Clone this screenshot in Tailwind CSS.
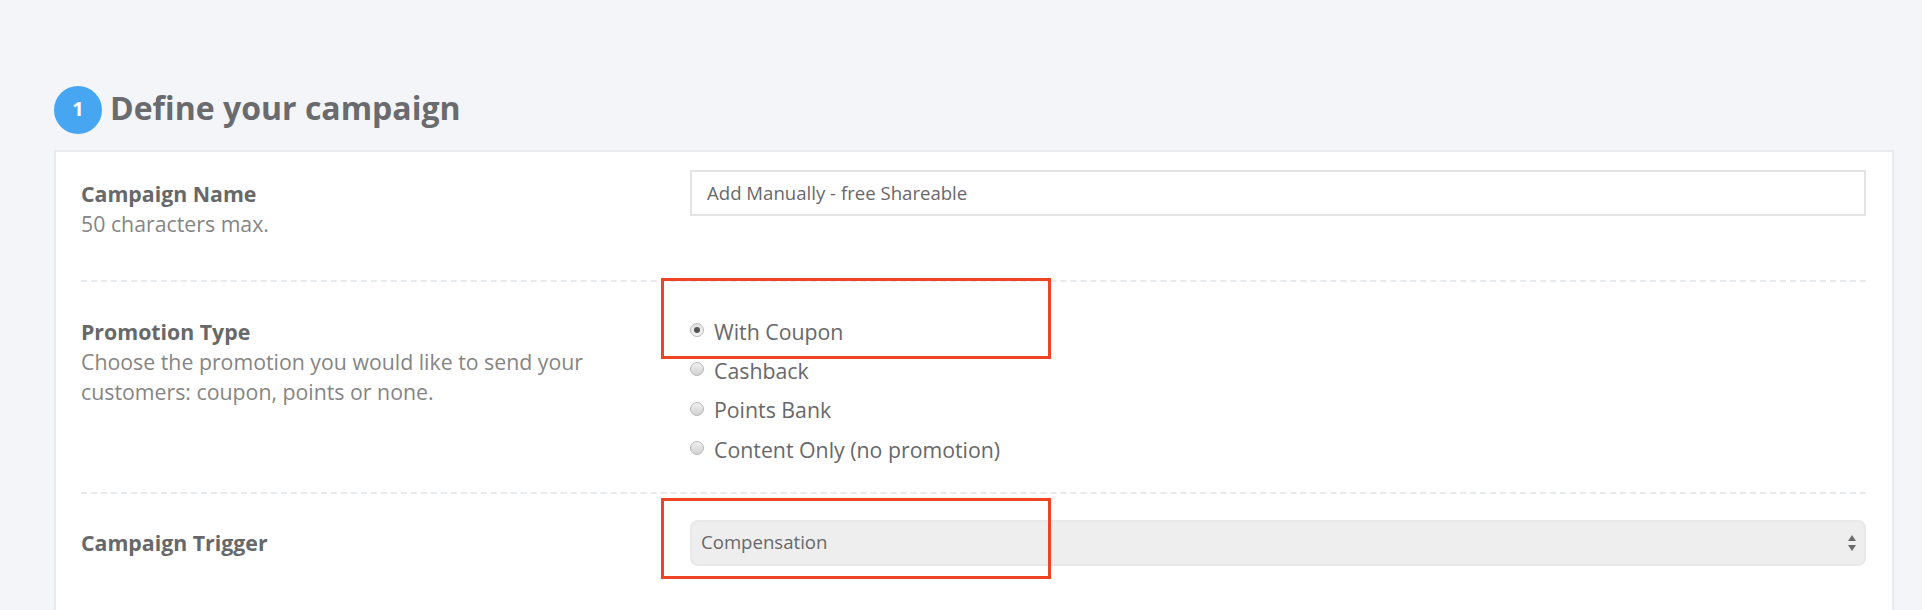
<!DOCTYPE html>
<html lang="en">
<head>
    <meta charset="UTF-8">
    <title>Define your campaign</title>
    <script src="https://cdn.jsdelivr.net/npm/@tailwindcss/browser@4"></script>
</head>
<body class="bg-[#f4f5f9] h-[610px] overflow-hidden font-['Open_Sans',sans-serif] text-[#67686a]">
    <div class="relative pl-[54px] pr-[28px] pt-[86px] h-[610px] overflow-hidden">
        <!-- Heading -->
        <div class="flex items-center gap-[8px] h-[48px]">
            <div class="w-[48px] h-[48px] rounded-full bg-[#47a6f1] text-white flex items-center justify-center text-[20px] font-bold pb-[2px]">1</div>
            <h1 class="text-[32px] leading-[48px] font-bold text-[#6a6b6e] mt-[-4px]">Define your campaign</h1>
        </div>

        <!-- Card -->
        <div class="mt-[16px] bg-white border-2 border-[#e9eaee] h-[500px] pl-[25px] pr-[26px]">
            <div class="flex h-[130px] border-b-2 border-dashed border-[#e8ebee] pt-[18px]">
                <div class="w-[609px] pt-[9px]">
                    <p class="text-[21.3px] leading-[30px] font-bold">Campaign Name</p>
                    <p class="text-[21.3px] leading-[30px] text-[#858585]">50 characters max.</p>
                </div>
                <input class="flex-1 h-[46px] border-2 border-[#e4e4e4] px-[15px] pb-[1px] text-[18.6px] text-[#67686a] outline-none bg-white" value="Add Manually - free Shareable">
            </div>

            <div class="flex h-[212px] border-b-2 border-dashed border-[#e8ebee] pt-[35px]">
                <div class="w-[609px]">
                    <p class="text-[21.3px] leading-[30px] font-bold">Promotion Type</p>
                    <p class="text-[21.3px] leading-[30px] text-[#858585]">Choose the promotion you would like to send your<br>customers: coupon, points or none.</p>
                </div>
                <div class="flex flex-col text-[21.3px] leading-[39.6px] mt-[-5px]">
                    <label class="flex items-center gap-[10px] mb-[-1px]">
                        <span class="w-[14px] h-[14px] rounded-full border border-[#b9b9b9] bg-linear-to-b from-[#e2e2e2] to-[#f4f4f4] flex items-center justify-center mt-[-4px]"><span class="w-[6px] h-[6px] rounded-full bg-[#555]"></span></span>
                        With Coupon
                    </label>
                    <label class="flex items-center gap-[10px]">
                        <span class="w-[14px] h-[14px] rounded-full border border-[#b9b9b9] bg-linear-to-b from-[#f0f0f0] to-[#d2d2d2] mt-[-2px]"></span>
                        Cashback
                    </label>
                    <label class="flex items-center gap-[10px]">
                        <span class="w-[14px] h-[14px] rounded-full border border-[#b9b9b9] bg-linear-to-b from-[#f0f0f0] to-[#d2d2d2] mt-[-2px]"></span>
                        Points Bank
                    </label>
                    <label class="flex items-center gap-[10px]">
                        <span class="w-[14px] h-[14px] rounded-full border border-[#b9b9b9] bg-linear-to-b from-[#f0f0f0] to-[#d2d2d2] mt-[-4px]"></span>
                        Content Only (no promotion)
                    </label>
                </div>
            </div>

            <div class="flex pt-[26px]">
                <div class="w-[609px] text-[21.3px] leading-[30px] font-bold pt-[8px]">Campaign Trigger</div>
                <div class="flex-1 h-[46px] rounded-[8px] border-2 border-[#e8e8e8] bg-[#eeeeee] flex items-center justify-between pl-[9px] pr-[7px] text-[18.6px] text-[#67686a]">
                    <span class="mt-[-2px]">Compensation</span>
                    <svg class="w-[10px] h-[16px]" viewBox="0 0 10 16"><path d="M5 0 9 6H1z" fill="#6b6b6b"/><path d="M5 16 1 10h8z" fill="#6b6b6b"/></svg>
                </div>
            </div>
        </div>

        <!-- Red annotation boxes -->
        <div class="absolute left-[661px] top-[278px] w-[390px] h-[81px] border-[3px] border-[#ee4423]"></div>
        <div class="absolute left-[661px] top-[498px] w-[390px] h-[81px] border-[3px] border-[#ee4423]"></div>
    </div>
</body>
</html>
